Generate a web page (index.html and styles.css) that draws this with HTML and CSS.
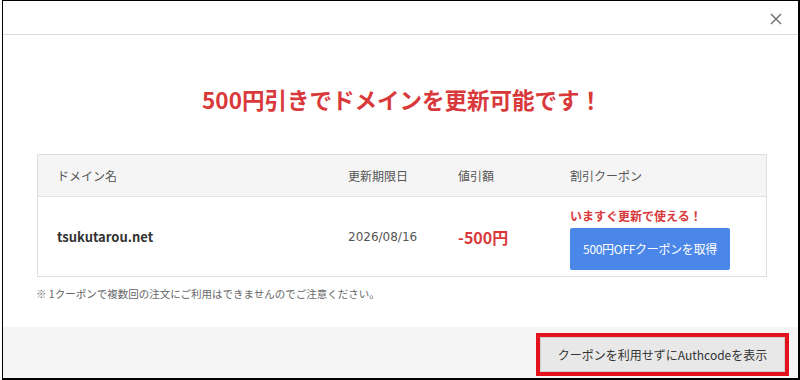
FILE: index.html
```html
<!DOCTYPE html>
<html lang="ja">
<head>
<meta charset="utf-8">
<link rel="stylesheet" href="styles.css">
</head>
<body>
<div class="frame">
  <div class="modal-header">
    <span class="close" aria-label="close">
      <svg width="12" height="12" viewBox="0 0 12 12"><path d="M1 1 L11 11 M11 1 L1 11" stroke="#6b6b6b" stroke-width="1.4" fill="none"/></svg>
    </span>
  </div>
  <div class="modal-body">
    <h1 class="title">500円引きでドメインを更新可能です！</h1>
    <div class="table">
      <div class="row head">
        <div class="cell">ドメイン名</div>
        <div class="cell">更新期限日</div>
        <div class="cell">値引額</div>
        <div class="cell">割引クーポン</div>
      </div>
      <div class="row body">
        <div class="cell domain">tsukutarou.net</div>
        <div class="cell date">2026/08/16</div>
        <div class="cell discount">-500円</div>
        <div class="cell coupon">
          <div class="now">いますぐ更新で使える！</div>
          <button class="get">500円OFFクーポンを取得</button>
        </div>
      </div>
    </div>
    <p class="note">※ 1クーポンで複数回の注文にご利用はできませんのでご注意ください。</p>
  </div>
  <div class="modal-footer">
    <div class="highlight">
      <button class="auth">クーポンを利用せずにAuthcodeを表示</button>
    </div>
  </div>
</div>
</body>
</html>
```
FILE: styles.css
```css
* { box-sizing: border-box; }
html, body { margin: 0; padding: 0; background: #fff; }
body {
  width: 800px;
  height: 380px;
  overflow: hidden;
  font-family: "Noto Sans CJK JP", "Noto Sans", sans-serif;
  color: #333;
}
.frame {
  margin-left: 2px;
  width: 798px;
  height: 380px;
  border-top: 1px solid #000;
  border-left: 1px solid #000;
  border-right: 2px solid #000;
  border-bottom: 2px solid #000;
  display: flex;
  flex-direction: column;
}
.modal-header {
  height: 34px;
  border-bottom: 1px solid #dcdcdc;
  display: flex;
  justify-content: flex-end;
  align-items: center;
  padding-right: 16px;
  padding-top: 3px;
}
.close { display: flex; }
.modal-body {
  flex: 1;
  padding: 0 31px 0 34px;
}
.title {
  margin: 49px 0 0;
  height: 38px;
  text-align: center;
  font-size: 22.5px;
  line-height: 30px;
  font-weight: bold;
  color: #d9393b;
  letter-spacing: 0;
}
.table {
  margin-top: 32px;
  border: 1px solid #dedede;
}
.row {
  display: grid;
  grid-template-columns: 291px 110px 112px 1fr;
  align-items: center;
}
.row.head {
  height: 42px;
  background: #f5f5f5;
  border-bottom: 1px solid #e2e2e2;
  font-size: 12px;
  color: #555;
}
.row.body {
  height: 79px;
  font-size: 12px;
}
.cell { padding-left: 19px; }
.domain { font-weight: bold; font-size: 13px; color: #333; }
.date { color: #555; font-family: "DejaVu Sans", sans-serif; font-size: 12px; }
.discount { color: #d9393b; font-weight: bold; font-size: 16px; }
.coupon { display: flex; flex-direction: column; padding-top: 4px; }
.now {
  color: #d9393b;
  font-weight: bold;
  font-size: 12px;
  line-height: 16px;
  margin-bottom: 4px;
}
.get {
  width: 160px;
  height: 42px;
  border: none;
  border-radius: 2px;
  background: #4a87e8;
  color: #fff;
  font-family: inherit;
  font-size: 12px;
  padding: 0;
  letter-spacing: -0.3px;
}
.note {
  margin: 9px 0 0 -1px;
  font-size: 10.5px;
  color: #666;
}
.modal-footer {
  height: 51px;
  background: #f5f5f5;
  display: flex;
  justify-content: flex-end;
  align-items: flex-start;
  padding-top: 6px;
  padding-right: 9px;
}
.highlight {
  width: 253px;
  height: 43px;
  border: 4px solid #e5121d;
  display: flex;
}
.auth {
  flex: 1;
  border: 1px solid #d0d0d0;
  background: #e8e8e8;
  color: #333;
  font-family: inherit;
  font-size: 12px;
  padding: 0;
}
```
